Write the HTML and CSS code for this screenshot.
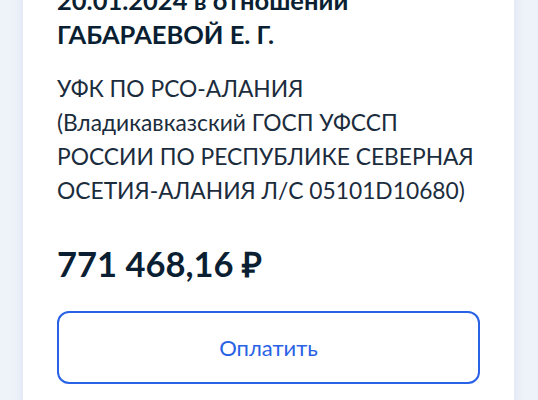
FILE: index.html
```html
<!DOCTYPE html>
<html lang="ru">
<head>
<meta charset="utf-8">
<link rel="stylesheet" href="styles.css">
</head>
<body>
<div class="page">
  <div class="card">
    <h2 class="title">20.01.2024 в отношении<br>ГАБАРАЕВОЙ Е. Г.</h2>
    <p class="payee">УФК ПО РСО-АЛАНИЯ<br>(Владикавказский ГОСП УФССП<br>РОССИИ ПО РЕСПУБЛИКЕ СЕВЕРНАЯ<br>ОСЕТИЯ-АЛАНИЯ Л/С 05101D10680)</p>
    <div class="amount">771 468,16 ₽</div>
    <button class="pay">Оплатить</button>
  </div>
</div>
</body>
</html>
```

FILE: styles.css
```css
html, body {
  margin: 0;
  padding: 0;
  background: #eef2f9;
  height: 400px;
  overflow: hidden;
}
body {
  font-family: Lato, "Liberation Sans", sans-serif;
  color: #0b1f33;
}
.page {
  padding: 0 24px 0 23px;
}
.card {
  background: #ffffff;
  margin-top: -17px;
  padding: 0 34px 40px 34px;
  box-shadow: 0 0 10px rgba(160, 180, 215, 0.25);
  width: 423px;
}
.title {
  margin: 0;
  font-size: 25.5px;
  line-height: 34px;
  font-weight: 700;
}
.payee {
  margin: 20px 0 0;
  font-size: 22.8px;
  line-height: 34px;
  font-weight: 400;
  color: #1b2c3d;
}
.amount {
  margin-top: 37px;
  font-size: 34.5px;
  line-height: 40px;
  font-weight: 700;
}
.pay {
  display: block;
  box-sizing: border-box;
  margin-top: 27px;
  width: 423px;
  height: 73px;
  border: 2px solid #2962e6;
  border-radius: 12px;
  background: #ffffff;
  color: #2962e6;
  font-family: Lato, "Liberation Sans", sans-serif;
  font-size: 22px;
  font-weight: 400;
}
```
